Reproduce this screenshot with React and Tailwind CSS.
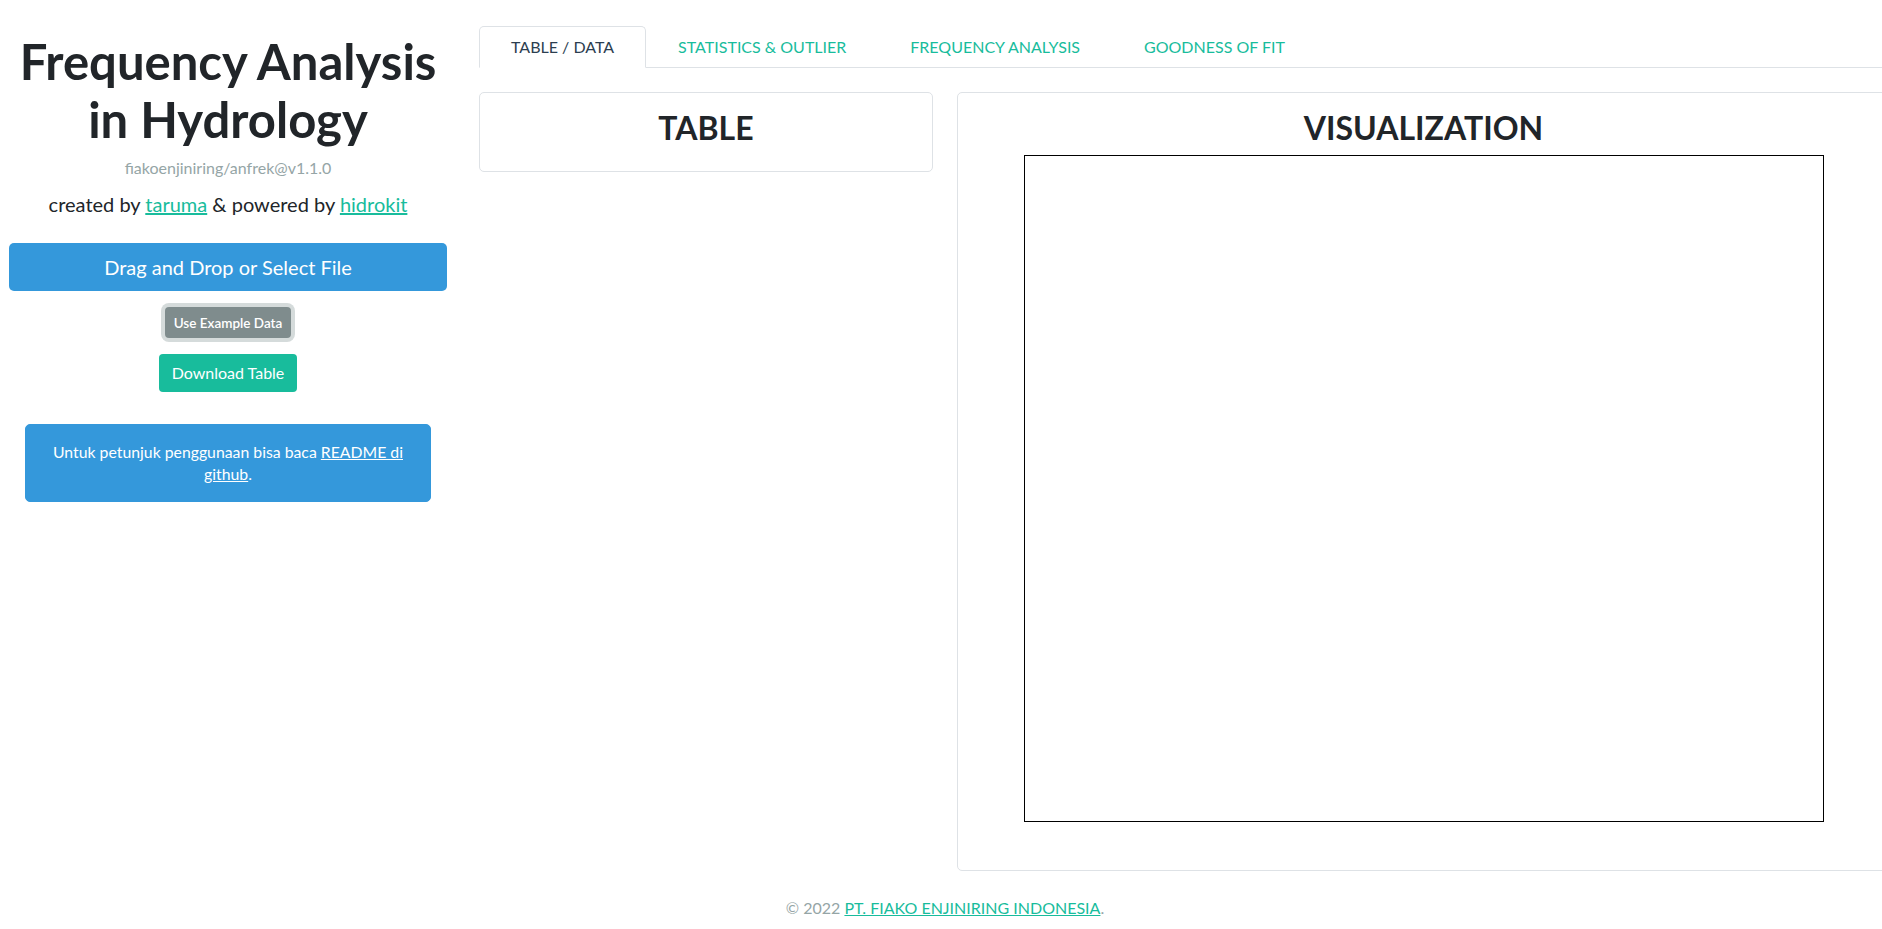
import React from "react"

const tabs = ["TABLE / DATA", "STATISTICS & OUTLIER", "FREQUENCY ANALYSIS", "GOODNESS OF FIT"]

function Sidebar() {
  return (
    <aside className="w-[456px] shrink-0 px-[9px] pt-[33px] flex flex-col items-center text-center">
      <h1 className="text-[49px] leading-[57.6px] font-bold text-[#212529]">
        Frequency Analysis
        <br />
        in Hydrology
      </h1>
      <p className="mt-[8px] text-[16px] leading-[24px] text-[#95a5a6]">fiakoenjiniring/anfrek@v1.1.0</p>
      <p className="mt-[9px] text-[20px] leading-[1.5] text-[#212529]">
        created by <a className="text-[#18bc9c] underline">taruma</a> &amp; powered by{" "}
        <a className="text-[#18bc9c] underline">hidrokit</a>
      </p>

      {/* upload area */}
      <div className="mt-[24px] w-full h-[48px] rounded-[5px] bg-[#3498db] text-white text-[20px] flex items-center justify-center">
        Drag and Drop or Select File
      </div>

      <button className="mt-[16px] h-[31px] px-[9px] rounded-[4px] bg-[#7f8c8d] text-white text-[13.5px] font-semibold ring-4 ring-[#d5dbdb] flex items-center">
        Use Example Data
      </button>

      <button className="mt-[16px] h-[38px] px-[13px] rounded-[4px] bg-[#18bc9c] text-white text-[16px] flex items-center">
        Download Table
      </button>

      <div className="mt-[32px] mx-4 self-stretch rounded-[5px] bg-[#3498db] border border-[#3498db] p-[16px] text-[15.8px] leading-[22px] text-white">
        Untuk petunjuk penggunaan bisa baca <a className="underline">README di github</a>.
      </div>
    </aside>
  )
}

function Tabs() {
  return (
    <nav className="flex border-b border-[#dee2e6]">
      {tabs.map((t, i) => (
        <div
          key={t}
          className={
            i === 0
              ? "-mb-px px-[31px] py-2 text-[16px] leading-[24px] border border-[#dee2e6] border-b-white rounded-t-[5px] bg-white text-[#2c3e50]"
              : "-mb-px px-[31px] py-2 text-[16px] leading-[24px] border border-transparent text-[#18bc9c]"
          }
        >
          {t}
        </div>
      ))}
    </nav>
  )
}

export default function App() {
  return (
    <div className="w-screen h-screen overflow-hidden bg-white font-[Lato,sans-serif]">
      <div className="w-[1890px]">
        <div className="flex">
          <Sidebar />

          <main className="flex-1 pl-[23px] pt-[26px]">
            <Tabs />

            <div className="mt-[24px] flex gap-6 items-start">
              <section className="w-[454px] shrink-0 border border-[#dee2e6] rounded-[5px] p-4">
                <h2 className="text-[32px] leading-[1.2] font-bold text-[#212529] text-center mb-2">TABLE</h2>
              </section>

              <section className="flex-1 border border-[#dee2e6] rounded-[5px] p-4">
                <h2 className="text-[32px] leading-[1.2] font-bold text-[#212529] text-center mb-2">VISUALIZATION</h2>
                <div className="mx-auto mb-8 w-[800px] h-[667px] border border-black bg-white"></div>
              </section>
            </div>
          </main>
        </div>

        <footer className="mt-[25px] text-center text-[16px] leading-[24px] text-[#95a5a6]">
          © 2022 <a className="text-[#18bc9c] underline">PT. FIAKO ENJINIRING INDONESIA</a>.
        </footer>
      </div>
    </div>
  )
}
